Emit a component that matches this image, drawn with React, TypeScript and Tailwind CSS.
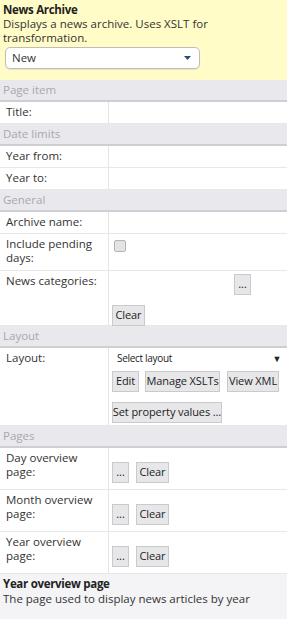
import React from "react";

const font = { fontFamily: '"Open Sans", "Noto Sans", sans-serif' };

const Section = ({ title }: { title: string }) => (
    <div className="h-[22px] shrink-0 bg-[#e9e9ed] border-b-2 border-[#cfcfd3] px-[3px] text-[11.5px] leading-[20px] text-[#a8a8ae]">
        {title}
    </div>
);

const Btn = ({ children, className = "" }: { children: React.ReactNode; className?: string }) => (
    <span className={`inline-flex h-[21px] items-center justify-center whitespace-nowrap bg-[#e7e7e9] border border-[#cacacc] text-[11px] tracking-[-0.1px] text-[#222] ${className}`}>
        {children}
    </span>
);

const Row = ({ label, h, children }: { label: React.ReactNode; h: string; children?: React.ReactNode }) => (
    <div className={`flex shrink-0 border-b border-[#e8e8e8] ${h}`}>
        <div className="w-[109px] shrink-0 border-r border-[#e4e4e4] px-[6px] pt-[3px] text-[11.5px] leading-[14px] text-[#333]">{label}</div>
        <div className="flex-1 min-w-0">{children}</div>
    </div>
);

const PageRow = ({ label }: { label: React.ReactNode }) => (
    <Row label={label} h="h-[42px]">
        <div className="flex gap-[7px] pl-[3px] pt-[14px]">
            <Btn className="w-[17px]">...</Btn>
            <Btn className="w-[33px]">Clear</Btn>
        </div>
    </Row>
);

export default function App() {
    return (
        <div className="w-[287px] h-[619px] bg-white overflow-hidden flex flex-col" style={font}>
            <div className="h-[80px] shrink-0 bg-[#fffcc7] px-[3px] pt-[3px] text-[11.5px] leading-[14px] text-[#333]">
                <div className="font-bold text-[#222] tracking-[-0.3px]">News Archive</div>
                <div>Displays a news archive. Uses XSLT for transformation.</div>
                <div className="mt-[2px] ml-[2px] w-[195px] h-[22px] rounded-[5px] border border-[#bdbdbd] bg-white flex items-center justify-between pl-[6px] pr-[8px] shadow-[0_1px_1px_rgba(0,0,0,0.08)]">
                    <span>New</span>
                    <svg width="7" height="4" viewBox="0 0 7 4"><path d="M0 0h7L3.5 4z" fill="#2c4a7a" /></svg>
                </div>
            </div>

            <Section title="Page item" />
            <Row label="Title:" h="h-[22px]" />

            <Section title="Date limits" />
            <Row label="Year from:" h="h-[22px]" />
            <Row label="Year to:" h="h-[22px]" />

            <Section title="General" />
            <Row label="Archive name:" h="h-[22px]" />
            <Row label={<>Include pending<br />days:</>} h="h-[37px]">
                <div className="pl-[5px] pt-[6px]">
                    <span className="block w-[12px] h-[12px] rounded-[2px] border border-[#b5b5b5] bg-[#e4e4e4]" />
                </div>
            </Row>
            <Row label="News categories:" h="h-[55px]">
                <div className="flex flex-col">
                    <div className="flex justify-end pr-[36px] pt-[3px]">
                        <Btn className="w-[17px]">...</Btn>
                    </div>
                    <div className="pl-[3px] pt-[6px]">
                        <Btn className="w-[33px]">Clear</Btn>
                    </div>
                </div>
            </Row>

            <Section title="Layout" />
            <Row label="Layout:" h="h-[78px]">
                <div className="flex flex-col pl-[3px]">
                    <div className="flex items-center justify-between pl-[5px] pr-[6px] h-[20px] pt-[1px] text-[10px] tracking-[-0.3px] text-[#222]">
                        <span>Select layout</span>
                        <span className="text-[9px]">▼</span>
                    </div>
                    <div className="flex mt-[3px]">
                        <Btn className="w-[27px]">Edit</Btn>
                        <Btn className="w-[75px] ml-[6px]">Manage XSLTs</Btn>
                        <Btn className="w-[52px] ml-[7px]">View XML</Btn>
                    </div>
                    <div className="mt-[6px]">
                        <Btn className="w-[110px]">Set property values ...</Btn>
                    </div>
                </div>
            </Row>

            <Section title="Pages" />
            <PageRow label={<>Day overview<br />page:</>} />
            <PageRow label={<>Month overview<br />page:</>} />
            <PageRow label={<>Year overview<br />page:</>} />

            <div className="flex-1 bg-[#f4f4f6] px-[3px] pt-[2px] text-[11.5px] leading-[15px] text-[#333]">
                <div className="font-bold text-[#222] tracking-[-0.3px]">Year overview page</div>
                <div>The page used to display news articles by year</div>
            </div>
        </div>
    );
}
